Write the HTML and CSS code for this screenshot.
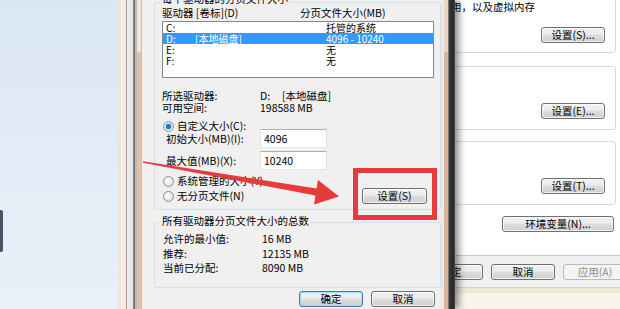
FILE: index.html
```html
<!DOCTYPE html>
<html lang="zh-CN">

<head>
    <meta charset="UTF-8">
    <meta name="viewport" content="width=device-width, initial-scale=1.0">
    <title>虚拟内存</title>
    <link rel="stylesheet" href="styles.css">
</head>

<body>
    <div class="screen">
        <div class="desktop">
            <div class="desktop-tab"></div>
        </div>
        <div class="frame-left"></div>

        <!-- 虚拟内存对话框 -->
        <div class="vm-dialog">
            <div class="group group-drive">
                <div class="group-title title-drive">每个驱动器的分页文件大小</div>
                <div class="list-head">
                    <span class="head-drive">驱动器 [卷标](D)</span>
                    <span>分页文件大小(MB)</span>
                </div>
                <div class="listbox">
                    <div class="list-row"><span class="col-drive">C:</span><span>托管的系统</span></div>
                    <div class="list-row selected"><span class="col-drive"><span class="letter">D:</span>[本地磁盘]</span><span>4096 - 10240</span></div>
                    <div class="list-row"><span class="col-drive">E:</span><span>无</span></div>
                    <div class="list-row"><span class="col-drive">F:</span><span>无</span></div>
                </div>
                <div class="info">
                    <div class="info-row"><span class="info-label">所选驱动器:</span><span><span class="letter-info">D:</span>[本地磁盘]</span></div>
                    <div class="info-row"><span class="info-label">可用空间:</span><span>198588 MB</span></div>
                </div>
                <div class="option option-custom"><span class="radio checked"></span>自定义大小(C):</div>
                <div class="size-row size-first"><span class="size-label">初始大小(MB)(I):</span><span class="field">4096</span></div>
                <div class="size-row size-second"><span class="size-label">最大值(MB)(X):</span><span class="field">10240</span></div>
                <div class="option option-system"><span class="radio"></span>系统管理的大小(Y)</div>
                <div class="option option-none"><span class="radio"></span>无分页文件(N)<button class="btn btn-set">设置(S)</button></div>
            </div>

            <div class="group group-total">
                <div class="group-title">所有驱动器分页文件大小的总数</div>
                <div class="total-rows">
                    <div class="total-row"><span class="total-label">允许的最小值:</span><span>16 MB</span></div>
                    <div class="total-row"><span class="total-label">推荐:</span><span>12135 MB</span></div>
                    <div class="total-row"><span class="total-label">当前已分配:</span><span>8090 MB</span></div>
                </div>
            </div>

            <div class="dialog-buttons">
                <button class="btn btn-dialog btn-default">确定</button>
                <button class="btn btn-dialog">取消</button>
            </div>
        </div>
        <div class="frame-right"></div>

        <!-- 系统属性（后面的窗口） -->
        <div class="sys-dialog">
            <div class="sys-panel">
                <div class="sys-group group-perf">
                    <div class="sys-text">用，以及虚拟内存</div>
                    <button class="btn btn-more">设置(S)...</button>
                </div>
                <div class="sys-group group-profile">
                    <button class="btn btn-more">设置(E)...</button>
                </div>
                <div class="sys-group group-startup">
                    <button class="btn btn-more">设置(T)...</button>
                </div>
                <button class="btn btn-env">环境变量(N)...</button>
            </div>
            <div class="sys-buttons">
                <button class="btn btn-dialog">确定</button>
                <button class="btn btn-dialog">取消</button>
                <button class="btn btn-dialog" disabled>应用(A)</button>
            </div>
            <div class="sys-frame-bottom"></div>
        </div>
    </div>

    <!-- 红色标注 -->
    <svg class="annotation" width="620" height="309" viewBox="0 0 620 309">
        <polygon points="143,161.3 316.6,188.5 318,180 339,196.5 314,204.5 315.4,195.5 143,162.8" fill="#e8393b" />
        <rect x="355.5" y="170.5" width="79" height="47" fill="none" stroke="#e8393b" stroke-width="5" />
    </svg>
</body>

</html>
```

FILE: styles.css
```css
* {
    box-sizing: border-box;
}

html,
body {
    margin: 0;
    padding: 0;
    width: 620px;
    height: 309px;
    overflow: hidden;
}

body {
    position: relative;
    font-family: "Noto Sans CJK SC", "Noto Sans", sans-serif;
    font-size: 10.5px;
    line-height: 12px;
    color: #000;
    background-color: #e1ebf6;
}

.screen {
    display: flex;
    height: 309px;
}

/* desktop on the left */
.desktop {
    flex: none;
    width: 118px;
    padding-top: 210px;
    background: linear-gradient(180deg, #dae6f3 0%, #e4edf7 60%, #e9f0f8 100%);
}

.desktop-tab {
    width: 3px;
    height: 42px;
    background-color: #4b5264;
    border-radius: 0 2px 2px 0;
}

.frame-left {
    flex: none;
    width: 25px;
    background:
        linear-gradient(180deg, #f4e6da 0, #f4e6da 52px, #e3bea0 52px) 19px 0 / 4px 100% no-repeat,
        linear-gradient(90deg, #ede4dc 0, #ede4dc 3px, #f9ece2 3px, #f9ece2 8px, #a49e98 8px, #a49e98 9px,
            #eeeeee 9px, #e4e4e4 15px, #8a8a8a 15px, #6e6e6e 17px, #bdb8b3 17px, #bdb8b3 19px,
            #f4e6da 19px, #f4e6da 23px, #bfbfbf 23px, #bfbfbf 24px, #f0f0f0 24px);
}

.frame-right {
    flex: none;
    width: 12px;
    position: relative;
    z-index: 2;
    background:
        linear-gradient(180deg, #ead3bf 0, #ead3bf 52px, #dcb394 52px) 1px 0 / 4px 100% no-repeat,
        linear-gradient(90deg, #ececec 0, #ececec 1px, #ead3bf 1px, #ead3bf 5px, #7d7670 5px, #7d7670 6px,
            #3d3d3d 6px, #262626 10px, #4a4a4a 12px);
    box-shadow: 4px 0 7px rgba(0, 0, 0, 0.45);
}

/* virtual memory dialog */
.vm-dialog {
    flex: none;
    width: 300px;
    padding: 0 2px 0 11px;
    background-color: #f0f0f0;
}

.group {
    border: 1px solid #d5dfe5;
    border-radius: 3px;
    padding: 0 6px 0 7px;
}

.group-title {
    width: fit-content;
    margin: -8px 0 0 -1px;
    padding: 0 1px;
    background-color: #f0f0f0;
}

.title-drive {
    margin-top: -10px;
}

.group-drive {
    margin-top: 2px;
    height: 208px;
}

.list-head {
    display: flex;
    margin-top: 2px;
}

.head-drive {
    flex: none;
    width: 138px;
}

.listbox {
    margin-top: 2px;
    height: 57px;
    border: 1px solid #828790;
    background-color: white;
}

.list-row {
    display: flex;
    height: 11px;
    font-size: 10px;
    line-height: 11px;
    padding-left: 3px;
    white-space: nowrap;
}

.list-row.selected {
    background-color: #3399ff;
    color: white;
}

.col-drive {
    flex: none;
    width: 160px;
}

.letter {
    display: inline-block;
    width: 29px;
}

.info {
    margin-top: 12px;
}

.info-row {
    display: flex;
    white-space: nowrap;
}

.info-label {
    flex: none;
    width: 98px;
}

.letter-info {
    display: inline-block;
    width: 22px;
}

.option {
    display: flex;
    align-items: center;
    height: 12px;
    white-space: nowrap;
}

.option-custom {
    margin-top: 6px;
}

.option-system {
    margin-top: 5px;
}

.option-none {
    margin-top: 1px;
    height: 16px;
}

.radio {
    flex: none;
    width: 11px;
    height: 11px;
    margin: 0 3px 0 1px;
    border: 1px solid #8e8f8f;
    border-radius: 50%;
    background: radial-gradient(circle at 40% 40%, #ffffff 0, #e6e6e6 60%, #d2d2d2 100%);
}

.radio.checked {
    background: radial-gradient(circle, #1f6dc4 0, #2b86d6 2.4px, #a6d6f3 3px, #eef4f8 4.2px);
}

.size-row {
    display: flex;
    align-items: center;
    height: 19px;
}

.size-first {
    margin-top: -3px;
}

.size-second {
    margin-top: 3px;
}

.size-label {
    flex: none;
    width: 98px;
    padding-left: 4px;
    white-space: nowrap;
}

.field {
    width: 67px;
    height: 19px;
    padding-left: 3px;
    line-height: 17px;
    background-color: white;
    border: 1px solid #abadb3;
    border-color: #abadb3 #dbdfe6 #e3e9ef #e2e3ea;
}

.group-total {
    margin-top: 12px;
    height: 66px;
}

.total-rows {
    margin-top: 5px;
}

.total-row {
    display: flex;
    height: 14.5px;
    line-height: 14.5px;
    padding-left: 1px;
    white-space: nowrap;
}

.total-label {
    flex: none;
    width: 99px;
}

.dialog-buttons {
    display: flex;
    justify-content: flex-end;
    gap: 8px;
    margin-top: 3px;
    padding-right: 6px;
}

/* buttons */
.btn {
    flex: none;
    height: 16px;
    padding: 0;
    font: inherit;
    line-height: 14px;
    color: #000;
    text-align: center;
    white-space: nowrap;
    border: 1px solid #707070;
    border-radius: 3px;
    background: linear-gradient(180deg, #f2f2f2 0%, #ebebeb 45%, #dddddd 50%, #cfcfcf 100%);
    box-shadow: inset 0 0 0 1px rgba(255, 255, 255, 0.7);
}

.btn-dialog {
    width: 64px;
}

.btn-default {
    border-color: #3c7fb1;
    box-shadow: inset 0 0 0 1px #9fdcf7;
}

.btn:disabled {
    color: #8d8d8d;
    border-color: #b8bcbf;
    background: #f4f4f4;
    box-shadow: none;
}

.btn-set {
    width: 65px;
    margin-left: auto;
    margin-right: 7px;
}

/* system properties window behind */
.sys-dialog {
    flex: 1;
    min-width: 0;
    margin-left: -8px;
    overflow: hidden;
    display: flex;
    flex-direction: column;
    background-color: #f0f0f0;
}

.sys-panel {
    flex: none;
    height: 256px;
    padding-right: 4px;
    background-color: white;
    border-bottom: 1px solid #c9c9c9;
}

.sys-group {
    margin-left: -20px;
    border: 1px solid #d9d9d9;
    border-radius: 3px;
}

.group-perf {
    margin-top: -10px;
    height: 63px;
    padding-top: 10px;
}

.group-profile {
    margin-top: 13px;
    height: 64px;
}

.group-startup {
    margin-top: 11px;
    height: 64px;
}

.sys-text {
    padding-left: 23px;
    white-space: nowrap;
}

.btn-more {
    display: block;
    width: 64px;
    margin: 36px 10px 0 auto;
}

.group-perf .btn-more {
    margin-top: 14px;
}

.btn-env {
    display: block;
    width: 112px;
    margin: 11px 2px 0 auto;
}

.sys-buttons {
    display: flex;
    gap: 8px;
    margin: 8px 0 0 -28px;
}

.sys-frame-bottom {
    flex: 1;
    margin-top: 7px;
    background: linear-gradient(180deg, #d9d2bd 0, #d9d2bd 1px, #efe8d2 1px, #efe8d2 6px, #f7f5ee 6px);
}

/* red annotation on top */
.annotation {
    position: absolute;
    left: 0;
    top: 0;
    pointer-events: none;
}
```
